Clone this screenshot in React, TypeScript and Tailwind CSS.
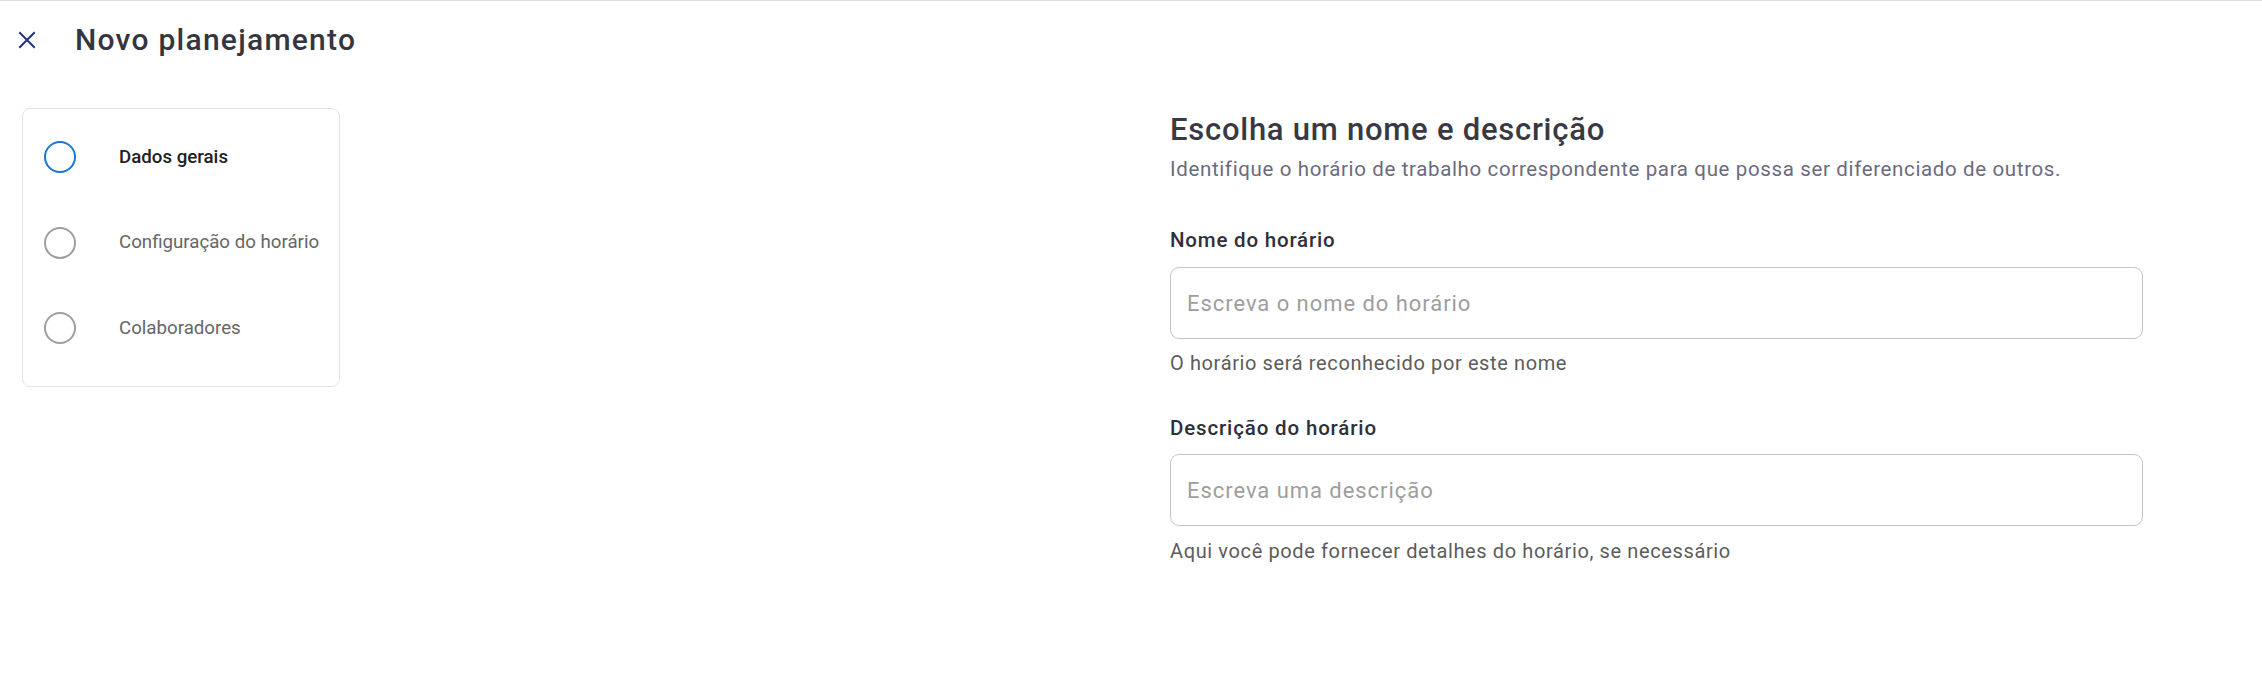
import React from 'react';

const steps = [
  { label: 'Dados gerais', active: true },
  { label: 'Configuração do horário', active: false },
  { label: 'Colaboradores', active: false },
];

const App: React.FC = () => {
  return (
    <div
      className="min-h-screen bg-white border-t border-[#e0e0e0]"
      style={{ fontFamily: 'Roboto, "Noto Sans", Arial, sans-serif' }}
    >
      {/* Header */}
      <div className="flex items-center h-[77px] pl-[18px]">
        <button className="w-[18px] h-[18px] flex items-center justify-center text-[#25337f]">
          <svg width="18" height="18" viewBox="0 0 18 18" fill="none">
            <path d="M2 2L16 16M16 2L2 16" stroke="currentColor" strokeWidth="2" strokeLinecap="square" />
          </svg>
        </button>
        <h1 className="ml-[39px] text-[30px] leading-[36px] tracking-[1.25px] font-medium text-[#35353f]">
          Novo planejamento
        </h1>
      </div>

      {/* Body */}
      <div className="flex justify-between pt-[30px] pl-[22px] pr-[119px]">
        {/* Stepper */}
        <div className="w-[318px] h-[279px] rounded-[8px] border border-[#e3e3e3] pt-[23px] pl-[21px] flex flex-col gap-[35.5px]">
          {steps.map((step) => (
            <div key={step.label} className="flex items-center h-[50px]">
              <div
                className={
                  step.active
                    ? 'w-[32px] h-[32px] rounded-full border-2 border-[#1976d2]'
                    : 'w-[32px] h-[32px] rounded-full border-2 border-[#9e9e9e]'
                }
              />
              <span
                className={
                  step.active
                    ? 'ml-[43px] text-[18.7px] font-medium text-[#212121]'
                    : 'ml-[43px] text-[18.7px] text-[#666666]'
                }
              >
                {step.label}
              </span>
            </div>
          ))}
        </div>

        {/* Form */}
        <div className="w-[973px] pt-[4px]">
          <h2 className="text-[31px] leading-[36px] tracking-[0.75px] font-medium text-[#393944]">
            Escolha um nome e descrição
          </h2>
          <p className="mt-[9px] text-[20.5px] leading-[24px] tracking-[0.64px] text-[#6b6b7e]">
            Identifique o horário de trabalho correspondente para que possa ser diferenciado de outros.
          </p>

          <label className="block mt-[47px] text-[20.5px] leading-[24px] tracking-[0.8px] font-medium text-[#2f2f38]">
            Nome do horário
          </label>
          <input
            type="text"
            placeholder="Escreva o nome do horário"
            className="mt-[15px] w-full h-[72px] rounded-[9px] border border-[#c4c4c4] px-[16px] text-[22px] tracking-[0.95px] text-[#333] placeholder:text-[#9e9e9e] outline-none"
          />
          <p className="mt-[12px] text-[20px] leading-[24px] tracking-[0.62px] text-[#5c5c5c]">
            O horário será reconhecido por este nome
          </p>

          <label className="block mt-[41px] text-[20.5px] leading-[24px] tracking-[0.85px] font-medium text-[#2f2f38]">
            Descrição do horário
          </label>
          <input
            type="text"
            placeholder="Escreva uma descrição"
            className="mt-[14px] w-full h-[72px] rounded-[9px] border border-[#c4c4c4] px-[16px] text-[22px] tracking-[0.95px] text-[#333] placeholder:text-[#9e9e9e] outline-none"
          />
          <p className="mt-[13px] text-[20px] leading-[24px] tracking-[0.62px] text-[#5c5c5c]">
            Aqui você pode fornecer detalhes do horário, se necessário
          </p>
        </div>
      </div>
    </div>
  );
};

export default App;
